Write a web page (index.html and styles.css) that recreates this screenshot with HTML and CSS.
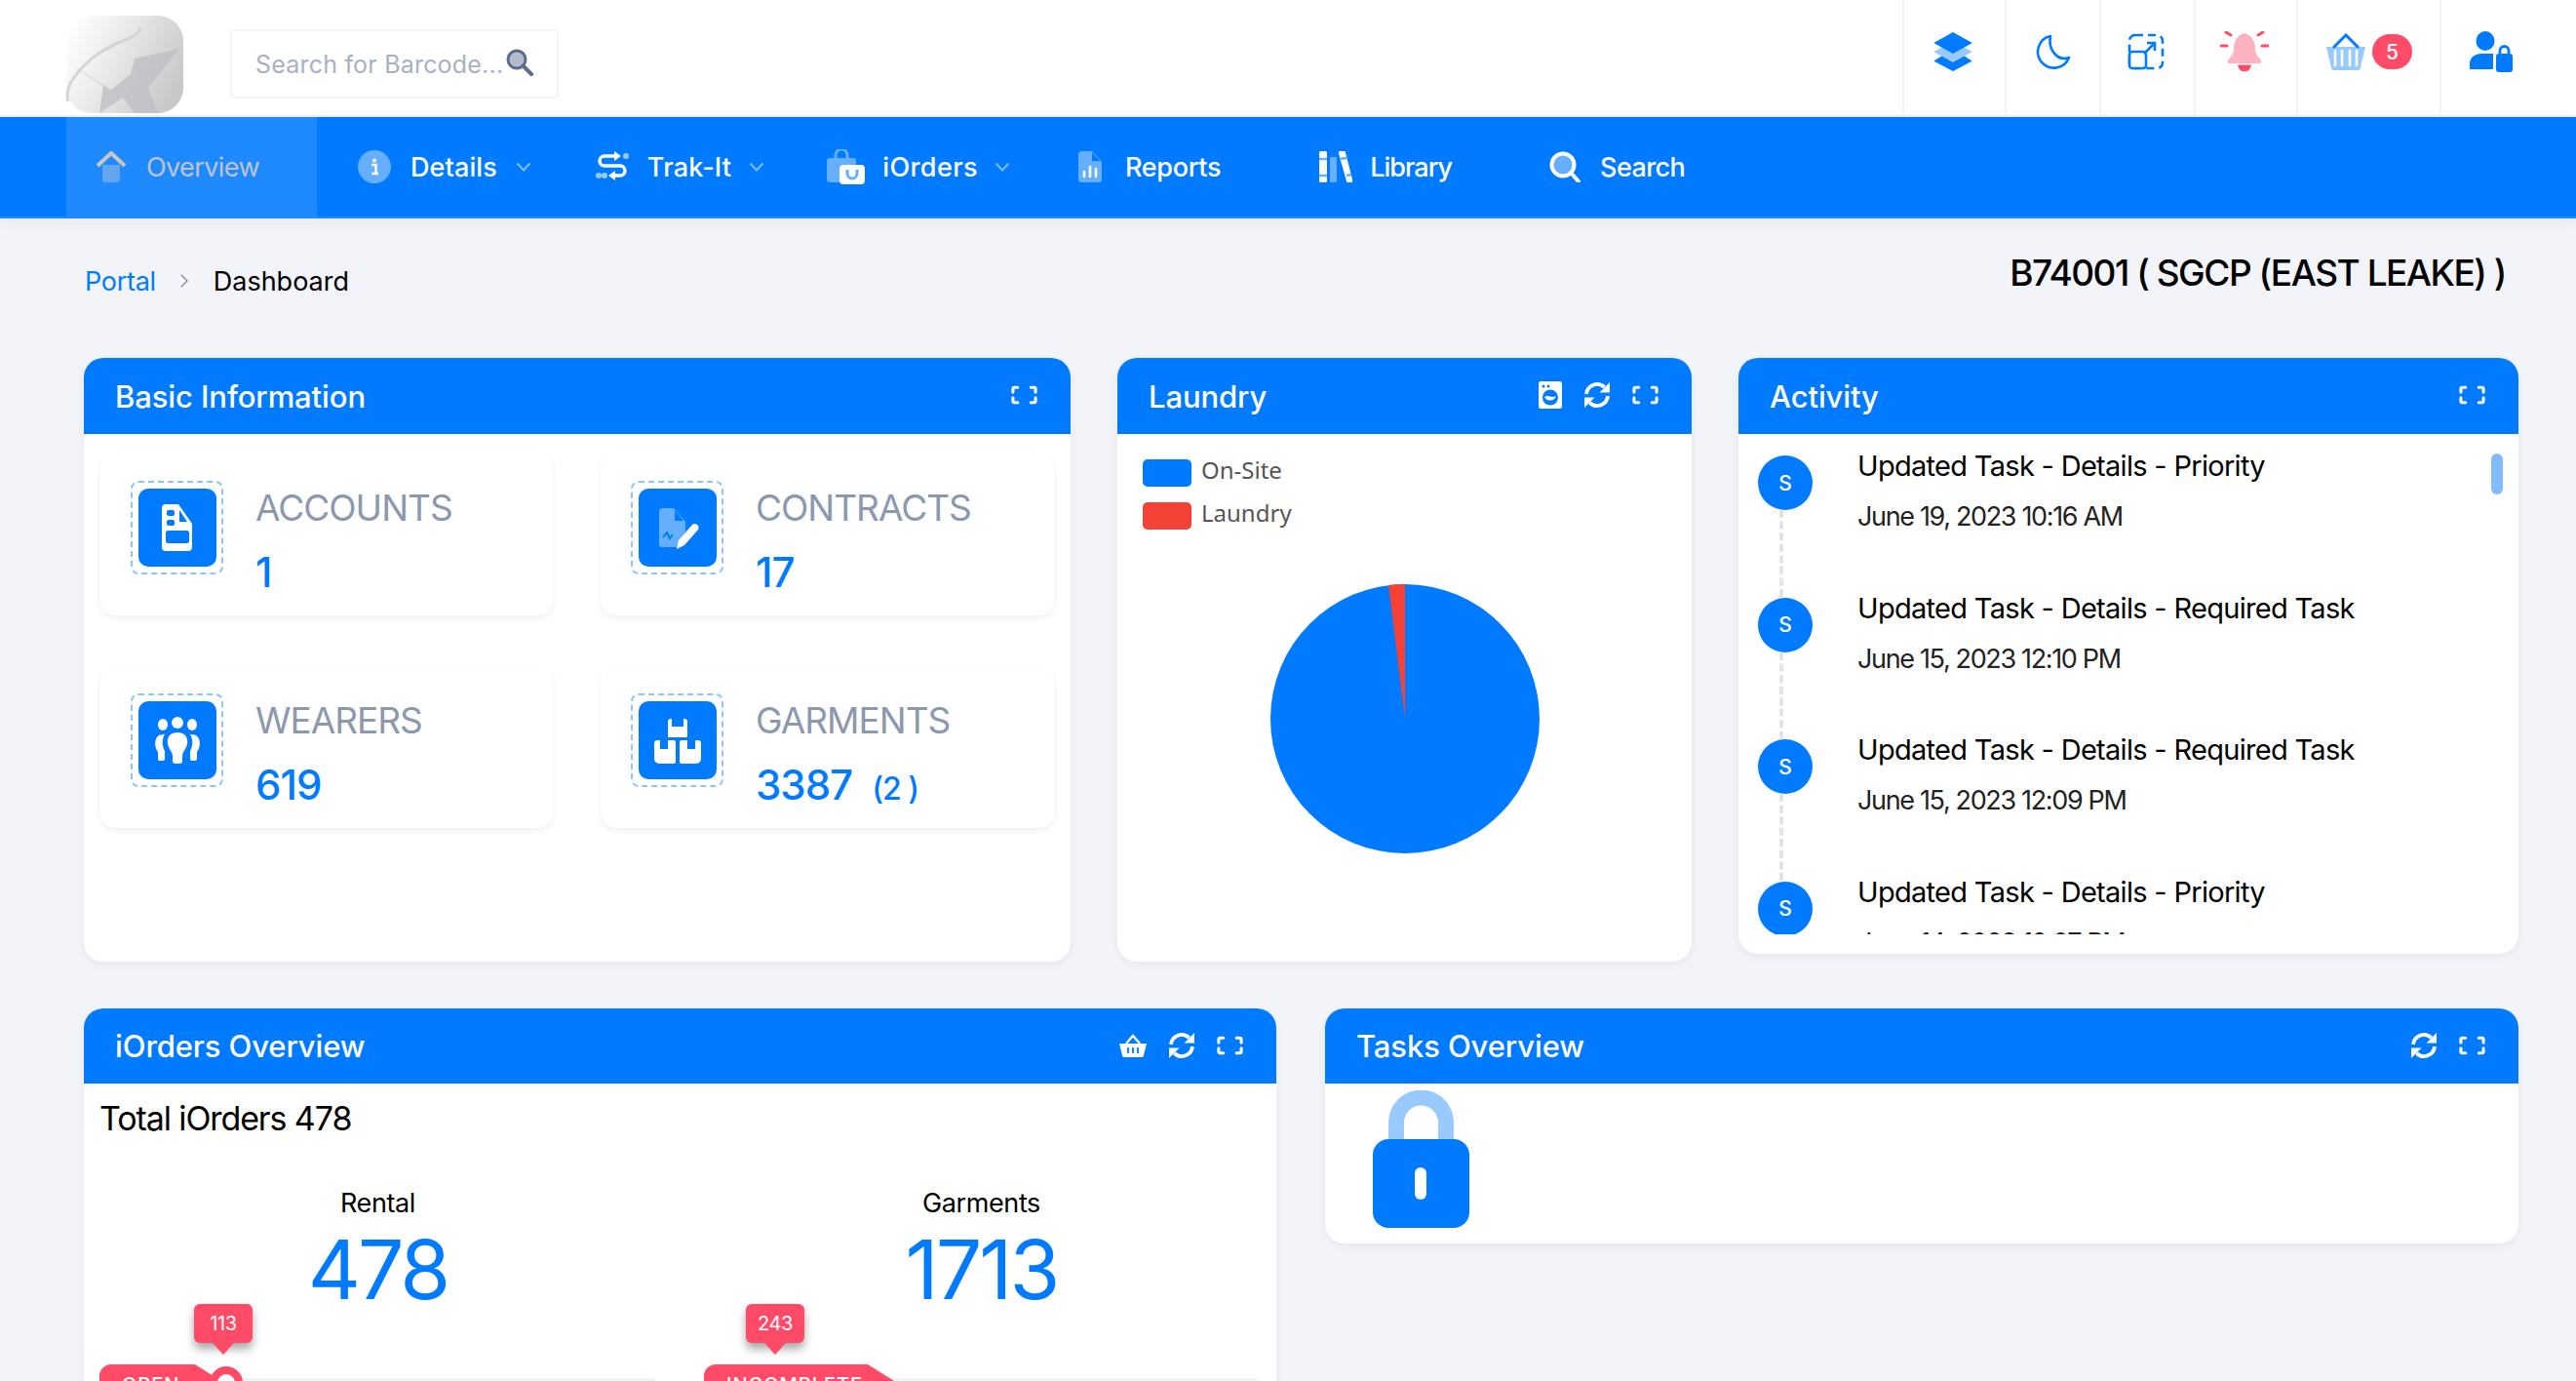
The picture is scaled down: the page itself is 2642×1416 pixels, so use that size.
FILE: index.html
```html
<!DOCTYPE html>
<html lang="en">
<head>
  <meta charset="UTF-8" />
  <title>Dashboard</title>
  <link rel="stylesheet" href="styles.css">
</head>
<body>

  <svg class="defs" width="0" height="0">
    <symbol id="i-expand" viewBox="0 0 28 20">
      <path d="M2 7V3.5A1.5 1.5 0 0 1 3.5 2H7M21 2h3.5A1.5 1.5 0 0 1 26 3.500V7M26 13v3.500a1.500 1.500 0 0 1-1.500 1.500H21M7 18H3.500A1.500 1.500 0 0 1 2 16.500V13" fill="none" stroke="#fff" stroke-width="3.200" stroke-linecap="round"/>
    </symbol>
    <symbol id="i-sync" viewBox="0 0 28 28">
      <path d="M3 13A11 11 0 0 1 21.500 6M25 15A11 11 0 0 1 6.500 22" fill="none" stroke="#fff" stroke-width="3.800"/>
      <path d="M27 1v10.500H16.500zM1 27V16.500h10.500z" fill="#fff"/>
    </symbol>
    <symbol id="i-chev" viewBox="0 0 16 10">
      <path d="M1.500 1.500L8 8.500l6.500-7" fill="none" stroke="#7fb9ff" stroke-width="2"/>
    </symbol>
  </svg>

  <header class="topbar">
    <div class="topbar-left">
      <svg class="logo" viewBox="0 0 122 100">
        <defs>
          <linearGradient id="logoFill" x1="0" y1="0.200" x2="1" y2="0.600">
            <stop offset="0" stop-color="#fff"/>
            <stop offset="0.450" stop-color="#e8e8e8"/>
            <stop offset="1" stop-color="#c8c8c8"/>
          </linearGradient>
        </defs>
        <rect x="2" y="0" width="120" height="100" rx="26" fill="url(#logoFill)"/>
        <path d="M78 12C76 26 50 24 26 46C8 62 0 76 4 88" fill="none" stroke="#d4d4d4" stroke-width="3"/>
        <path d="M0 46L48 76L68 60L72 44L118 34L86 74L96 100H72L60 84L36 100L40 72z" fill="#bcbec2" opacity="0.750"/>
      </svg>
      <div class="barcode-search">
        <span class="barcode-text">Search for Barcode...</span>
        <svg class="barcode-icon" viewBox="0 0 28 28">
          <circle cx="11" cy="11" r="9" fill="#b4bccb" stroke="#5a6d8f" stroke-width="3"/>
          <path d="M17.500 17.500L26 26" stroke="#5a6d8f" stroke-width="4" stroke-linecap="round"/>
        </svg>
      </div>
    </div>
    <div class="topbar-right">
      <div class="tool tool-layers">
        <svg width="40" height="40" viewBox="0 0 40 40">
          <path d="M20 17L38 28.500a1 1 0 0 1 0 2L20 40L2 30.500a1 1 0 0 1 0-2z" fill="#007bff"/>
          <path d="M20 9L38 19a1 1 0 0 1 0 2L20 31L2 21a1 1 0 0 1 0-2z" fill="#99caff"/>
          <path d="M20 0L38 10a1 1 0 0 1 0 2L20 22L2 12a1 1 0 0 1 0-2z" fill="#007bff"/>
        </svg>
      </div>
      <div class="tool tool-moon">
        <svg width="36" height="36" viewBox="0 0 36 36">
          <path d="M15 2A16.500 16.500 0 1 0 34 24C24 28 12 18 15 2z" fill="none" stroke="#007bff" stroke-width="2.600" stroke-linejoin="round"/>
        </svg>
      </div>
      <div class="tool tool-resize">
        <svg width="38" height="38" viewBox="0 0 38 38">
          <rect x="2" y="2" width="34" height="34" rx="6" fill="none" stroke="#007bff" stroke-width="2.600" stroke-dasharray="8 5"/>
          <rect x="2" y="19" width="17" height="17" rx="3" fill="#fff" stroke="#007bff" stroke-width="2.600"/>
          <path d="M17 21L27 11M20 10h8v8" fill="none" stroke="#007bff" stroke-width="2.600"/>
        </svg>
      </div>
      <div class="tool tool-bell">
        <svg width="50" height="42" viewBox="0 0 50 42">
          <path d="M25 2c8 2 11 9 11 16 0 5 3 8 6 12 1 2 0 3-2 3H10c-2 0-3-1-2-3 3-4 6-7 6-12 0-7 3-14 11-16z" fill="#ffb3c0"/>
          <path d="M20 36h10c-1 5-9 5-10 0zM6 1l5 3M44 1l-5 3M1 15h6M43 15h6" stroke="#ff4a68" stroke-width="3" stroke-linecap="round" fill="#ff4a68"/>
        </svg>
      </div>
      <div class="tool tool-basket">
        <svg width="42" height="38" viewBox="0 0 42 38">
          <path d="M1 14h40l-5 21a3 3 0 0 1-3 3H9a3 3 0 0 1-3-3z" fill="#99caff"/>
          <path d="M10 18v15M17 18v15M25 18v15M32 18v15" stroke="#fff" stroke-width="2.600" stroke-linecap="round"/>
          <path d="M9 14L21 2L33 14" fill="none" stroke="#007bff" stroke-width="3" stroke-linecap="round"/>
        </svg>
        <span class="count-badge">5</span>
      </div>
      <div class="tool tool-user">
        <svg width="44" height="42" viewBox="0 0 44 42">
          <ellipse cx="16" cy="10" rx="9.500" ry="10" fill="#007bff"/>
          <path d="M0 39V33C0 27 6 23 12 23H24V39z" fill="#007bff"/>
          <rect x="27" y="23" width="17" height="19" rx="3" fill="#007bff"/>
          <path d="M31 24v-4a4.500 4.500 0 0 1 9 0v4" fill="none" stroke="#007bff" stroke-width="2.800"/>
        </svg>
      </div>
    </div>
  </header>

  <nav class="mainnav">
    <a class="nav-item active">
      <svg width="32" height="32" viewBox="0 0 32 32">
        <path d="M7 14h18v15a3 3 0 0 1-3 3H10a3 3 0 0 1-3-3z" fill="#62a6ef"/>
        <path d="M2 15L16 2L30 15" fill="none" stroke="#c9c5bf" stroke-width="4"/>
      </svg>
      <span>Overview</span>
    </a>
    <a class="nav-item item-details">
      <svg width="34" height="34" viewBox="0 0 34 34">
        <circle cx="17" cy="17" r="17" fill="#66afff"/>
        <path d="M14 15h4.500v9H21M14.500 24h6.500" fill="none" stroke="#fff" stroke-width="2.400"/>
        <circle cx="17" cy="10.500" r="2" fill="#fff"/>
      </svg>
      <span>Details</span>
      <svg class="chev"><use href="#i-chev"/></svg>
    </a>
    <a class="nav-item item-trak">
      <svg width="34" height="32" viewBox="0 0 34 32">
        <path d="M20 5H9a4.500 4.500 0 0 0 0 10h16a4.500 4.500 0 0 1 0 10h-6" fill="none" stroke="#fff" stroke-width="3.400"/>
        <path d="M19 0l7 5-7 5zM20 20l-7 5 7 5z" fill="#fff"/>
        <circle cx="31" cy="5" r="3" fill="#99caff"/>
        <circle cx="3" cy="25" r="3" fill="#99caff"/>
        <circle cx="9" cy="25" r="3" fill="#99caff"/>
      </svg>
      <span>Trak-It</span>
      <svg class="chev"><use href="#i-chev"/></svg>
    </a>
    <a class="nav-item item-iorders">
      <svg width="39" height="36" viewBox="0 0 39 36">
        <rect x="0" y="9" width="30" height="25" rx="3" fill="#66afff"/>
        <path d="M9 10V6a6 6 0 0 1 12 0v4" fill="none" stroke="#66afff" stroke-width="3"/>
        <rect x="13" y="16" width="26" height="20" rx="4" fill="#fff"/>
        <path d="M21 21v4a5 5 0 0 0 10 0v-4" fill="none" stroke="#66afff" stroke-width="3"/>
      </svg>
      <span>iOrders</span>
      <svg class="chev"><use href="#i-chev"/></svg>
    </a>
    <a class="nav-item item-reports">
      <svg width="24" height="32" viewBox="0 0 24 32">
        <path d="M4 0h10l10 11v18a3 3 0 0 1-3 3H3a3 3 0 0 1-3-3V4a4 4 0 0 1 4-4z" fill="#66afff"/>
        <path d="M14 1v9h8z" fill="#007bff"/>
        <path d="M6 26v-5M12 26v-10M18 26v-8" stroke="#fff" stroke-width="2.600" stroke-linecap="round"/>
      </svg>
      <span>Reports</span>
    </a>
    <a class="nav-item item-library">
      <svg width="34" height="32" viewBox="0 0 34 32">
        <rect x="0" y="0" width="8" height="32" rx="1.500" fill="#fff"/>
        <path d="M0 8h8M0 25h8" stroke="#66afff" stroke-width="2.500"/>
        <rect x="11" y="6" width="7" height="26" rx="1.500" fill="#66afff"/>
        <path d="M20 2.500a3.500 3.500 0 0 1 7-1L34 29a3 3 0 0 1-6 2z" fill="#fff"/>
        <path d="M21 8l7-1M28 25l5-1" stroke="#66afff" stroke-width="2.500"/>
      </svg>
      <span>Library</span>
    </a>
    <a class="nav-item item-search">
      <svg width="32" height="32" viewBox="0 0 32 32">
        <circle cx="14" cy="14" r="11.500" fill="#66afff" stroke="#fff" stroke-width="4"/>
        <path d="M22 22L30 31" stroke="#fff" stroke-width="4" stroke-linecap="round"/>
      </svg>
      <span>Search</span>
    </a>
  </nav>

  <main class="content">
    <div class="page-head">
      <div class="crumbs">
        <a class="crumb-link">Portal</a>
        <svg class="crumb-sep" viewBox="0 0 10 16"><path d="M2 2l6 6-6 6" fill="none" stroke="#8d99ae" stroke-width="1.600"/></svg>
        <span class="crumb-now">Dashboard</span>
      </div>
      <h1 class="site-title">B74001 ( SGCP (EAST LEAKE) )</h1>
    </div>

    <section class="row row-top">
      <div class="card card-info">
        <div class="card-head">
          <h2>Basic Information</h2>
          <div class="head-icons"><svg class="ic-expand"><use href="#i-expand"/></svg></div>
        </div>
        <div class="tiles">
          <div class="tile">
            <div class="tile-icon">
              <svg width="80" height="80" viewBox="0 0 80 80">
                <path d="M28 16h13l14 20v24a4 4 0 0 1-4 4H28a4 4 0 0 1-4-4V20a4 4 0 0 1 4-4z" fill="#fff"/>
                <path d="M42 22v12h8z" fill="#007bff"/>
                <rect x="29" y="22" width="8" height="6" rx="2" fill="#007bff"/>
                <rect x="29" y="32" width="8" height="6" rx="2" fill="#007bff"/>
                <rect x="28" y="43" width="24" height="13" rx="2.500" fill="#007bff"/>
              </svg>
            </div>
            <div class="tile-text">
              <div class="tile-label">ACCOUNTS</div>
              <div class="tile-value">1</div>
            </div>
          </div>
          <div class="tile">
            <div class="tile-icon">
              <svg width="80" height="80" viewBox="0 0 80 80">
                <path d="M25 20h11l12 14v10L40 60H24a3 3 0 0 1-3-3V24a4 4 0 0 1 4-4z" fill="#66afff"/>
                <path d="M37 22v11h9z" fill="#007bff"/>
                <path d="M25 50l4-5 3 6 3-4" fill="none" stroke="#007bff" stroke-width="2"/>
                <path d="M39 62l2-9 14-16a4 4 0 0 1 6 5L47 58z" fill="#fff"/>
              </svg>
            </div>
            <div class="tile-text">
              <div class="tile-label">CONTRACTS</div>
              <div class="tile-value">17</div>
            </div>
          </div>
          <div class="tile">
            <div class="tile-icon">
              <svg width="80" height="80" viewBox="0 0 80 80">
                <circle cx="40" cy="22" r="6" fill="#fff"/>
                <ellipse cx="25" cy="24" rx="5" ry="6" fill="#fff"/>
                <ellipse cx="55" cy="24" rx="5" ry="6" fill="#fff"/>
                <path d="M40 32c8 0 11 5 10 12-1 5-5 8-5 12v5a3 3 0 0 1-3 3h-4a3 3 0 0 1-3-3v-5c0-4-4-7-5-12-1-7 2-12 10-12z" fill="#fff"/>
                <path d="M27 34c-3 4-3 12 0 17v8a2 2 0 0 1-2 2h-3a2 2 0 0 1-2-2v-7c-4-5-4-14 1-17 2-1 4-1 6-1zM53 34c3 4 3 12 0 17v8a2 2 0 0 0 2 2h3a2 2 0 0 0 2-2v-7c4-5 4-14-1-17-2-1-4-1-6-1z" fill="#fff"/>
              </svg>
            </div>
            <div class="tile-text">
              <div class="tile-label">WEARERS</div>
              <div class="tile-value">619</div>
            </div>
          </div>
          <div class="tile">
            <div class="tile-icon">
              <svg width="80" height="80" viewBox="0 0 80 80">
                <path d="M30 21a3 3 0 0 1 3-3h1v8h12v-8h1a3 3 0 0 1 3 3v16H30z" fill="#fff"/>
                <path d="M16 43a3 3 0 0 1 3-3h3v9h8v-9h6a2 2 0 0 1 2 2v20a2 2 0 0 1-2 2H21a5 5 0 0 1-5-5z" fill="#fff"/>
                <path d="M42 42a2 2 0 0 1 2-2h6v9h8v-9h3a3 3 0 0 1 3 3v16a5 5 0 0 1-5 5H44a2 2 0 0 1-2-2z" fill="#fff"/>
              </svg>
            </div>
            <div class="tile-text">
              <div class="tile-label">GARMENTS</div>
              <div class="tile-value">3387 <small>(2 )</small></div>
            </div>
          </div>
        </div>
      </div>

      <div class="card card-laundry">
        <div class="card-head">
          <h2>Laundry</h2>
          <div class="head-icons">
            <svg class="ic-washer" viewBox="0 0 24 28">
              <rect width="24" height="28" rx="2.500" fill="#fff"/>
              <circle cx="12" cy="16.500" r="8" fill="#007bff"/>
              <path d="M6 16c4-3 7 2 12-1a6.500 6.500 0 0 1-12 1z" fill="#fff"/>
              <circle cx="5" cy="5" r="1.500" fill="#007bff"/>
              <circle cx="10" cy="5" r="1.500" fill="#007bff"/>
            </svg>
            <svg class="ic-sync"><use href="#i-sync"/></svg>
            <svg class="ic-expand"><use href="#i-expand"/></svg>
          </div>
        </div>
        <div class="legend">
          <div class="legend-row"><i class="swatch swatch-blue"></i><span>On-Site</span></div>
          <div class="legend-row"><i class="swatch swatch-red"></i><span>Laundry</span></div>
        </div>
        <div class="pie-wrap">
          <svg class="pie" width="276" height="276" viewBox="0 0 276 276">
            <circle cx="138" cy="138" r="138" fill="#007bff"/>
            <path d="M138 138V0A138 138 0 0 0 121 1z" fill="#f44336"/>
          </svg>
        </div>
      </div>

      <div class="card card-activity">
        <div class="card-head">
          <h2>Activity</h2>
          <div class="head-icons"><svg class="ic-expand"><use href="#i-expand"/></svg></div>
        </div>
        <div class="feed-box">
          <div class="feed">
            <div class="feed-row">
              <div class="feed-rail"><span class="avatar">S</span></div>
              <div>
                <div class="feed-title">Updated Task - Details - Priority</div>
                <div class="feed-date">June 19, 2023 10:16 AM</div>
              </div>
            </div>
            <div class="feed-row">
              <div class="feed-rail"><span class="avatar">S</span></div>
              <div>
                <div class="feed-title">Updated Task - Details - Required Task</div>
                <div class="feed-date">June 15, 2023 12:10 PM</div>
              </div>
            </div>
            <div class="feed-row">
              <div class="feed-rail"><span class="avatar">S</span></div>
              <div>
                <div class="feed-title">Updated Task - Details - Required Task</div>
                <div class="feed-date">June 15, 2023 12:09 PM</div>
              </div>
            </div>
            <div class="feed-row">
              <div class="feed-rail"><span class="avatar">S</span></div>
              <div>
                <div class="feed-title">Updated Task - Details - Priority</div>
                <div class="feed-date">June 14, 2023 12:07 PM</div>
              </div>
            </div>
          </div>
          <div class="scroll-thumb"></div>
        </div>
      </div>
    </section>

    <section class="row row-bottom">
      <div class="card card-orders">
        <div class="card-head">
          <h2>iOrders Overview</h2>
          <div class="head-icons">
            <svg class="ic-basket" viewBox="0 0 28 24">
              <path d="M0 10h28l-3 12a2 2 0 0 1-2 2H5a2 2 0 0 1-2-2z" fill="#fff"/>
              <path d="M7 10L14 2l7 8" fill="none" stroke="#fff" stroke-width="2.400"/>
              <path d="M9 14v6M14 14v6M19 14v6" stroke="#007bff" stroke-width="1.800"/>
            </svg>
            <svg class="ic-sync"><use href="#i-sync"/></svg>
            <svg class="ic-expand"><use href="#i-expand"/></svg>
          </div>
        </div>
        <div class="orders-body">
          <div class="orders-total">Total iOrders 478</div>
          <div class="orders-cols">
            <div class="orders-col">
              <div class="col-label">Rental</div>
              <div class="col-value">478</div>
              <div class="progress">
                <div class="track"></div>
                <div class="ribbon ribbon-open">OPEN</div>
                <span class="knob"></span>
                <div class="bubble bubble-open">113</div>
              </div>
            </div>
            <div class="orders-col">
              <div class="col-label">Garments</div>
              <div class="col-value">1713</div>
              <div class="progress">
                <div class="track"></div>
                <div class="ribbon ribbon-incomplete">INCOMPLETE</div>
                <div class="bubble bubble-incomplete">243</div>
              </div>
            </div>
          </div>
        </div>
      </div>

      <div class="card card-tasks">
        <div class="card-head">
          <h2>Tasks Overview</h2>
          <div class="head-icons">
            <svg class="ic-sync"><use href="#i-sync"/></svg>
            <svg class="ic-expand"><use href="#i-expand"/></svg>
          </div>
        </div>
        <div class="tasks-body">
          <svg width="99" height="141" viewBox="0 0 99 141">
            <path d="M24 52V33a25.500 25.500 0 0 1 51 0v19" fill="none" stroke="#99caff" stroke-width="16"/>
            <rect x="0" y="50" width="99" height="91" rx="16" fill="#007bff"/>
            <rect x="43" y="79" width="12" height="33" rx="6" fill="#fff"/>
          </svg>
        </div>
      </div>
    </section>
  </main>

</body>
</html>
```

FILE: styles.css
```css
* {
  box-sizing: border-box;
}

html {
  height: 100%;
  overflow: hidden;
}

body {
  margin: 0;
  height: 100vh;
  overflow: hidden;
  background: #f2f4f9;
  font-family: Inter, "Liberation Sans", sans-serif;
  color: #000;
}

h1, h2 {
  margin: 0;
  font-weight: 500;
}

.defs {
  position: absolute;
}

/* top bar */
.topbar {
  height: 120px;
  background: #fff;
  border-bottom: 2px solid #f0f0f0;
  display: flex;
  justify-content: space-between;
}

.topbar-left {
  display: flex;
  align-items: flex-start;
  padding-left: 66px;
}

.logo {
  width: 122px;
  height: 100px;
  margin-top: 16px;
}

.barcode-search {
  width: 337px;
  height: 71px;
  margin: 30px 0 0 48px;
  padding: 0 24px;
  border: 2px solid #f1f3fb;
  border-radius: 6px;
  display: flex;
  align-items: center;
  gap: 3px;
}

.barcode-text {
  font-size: 25px;
  letter-spacing: 0.2px;
  color: #a9b1c1;
  white-space: nowrap;
}

.barcode-icon {
  width: 28px;
  height: 28px;
  margin-top: -3px;
  flex: none;
}

.topbar-right {
  display: flex;
}

.tool {
  display: flex;
  align-items: center;
  justify-content: center;
  border-left: 2px solid #f3f3f3;
  height: 118px;
  padding-bottom: 12px;
}

.tool-layers { width: 105px; padding-right: 3px; }
.tool-moon { width: 97px; }
.tool-resize { width: 97px; padding-right: 3px; }
.tool-bell { width: 105px; padding-right: 3px; }
.tool-basket { width: 147px; gap: 6px; }
.tool-user { width: 140px; padding-right: 36px; }

.count-badge {
  width: 41px;
  height: 36px;
  border-radius: 18px;
  background: #ff4a68;
  color: #fff;
  font-size: 21px;
  font-weight: 500;
  display: flex;
  align-items: center;
  justify-content: center;
}

/* nav */
.mainnav {
  height: 104px;
  background: #007bff;
  border-bottom: 2px solid #1a8cff;
  box-shadow: 0 4px 12px rgba(0, 0, 0, 0.05);
  display: flex;
  padding-left: 68px;
  color: #fff;
  font-size: 27px;
  font-weight: 500;
  letter-spacing: -0.3px;
}

.nav-item {
  display: flex;
  align-items: center;
  gap: 20px;
  margin-left: 66px;
}

.nav-item svg {
  flex: none;
}

.nav-item.active {
  width: 257px;
  margin-left: 0;
  padding-left: 30px;
  background: #1f8aff;
  color: #bfc3c9;
  font-weight: 400;
  letter-spacing: -0.6px;
}

.item-details { margin-left: 42px; letter-spacing: 0.1px; }
.item-trak { gap: 19px; letter-spacing: 0.2px; }
.item-iorders { margin-left: 64px; gap: 18px; letter-spacing: 0.4px; }
.item-reports { margin-left: 70px; gap: 24px; }
.item-library { margin-left: 101px; gap: 18px; letter-spacing: -1px; }
.item-search { margin-left: 100px; gap: 20px; letter-spacing: -0.6px; }

.chev {
  width: 16px;
  height: 10px;
  margin-left: -1px;
}

/* page */
.content {
  padding: 0 59px 0 86px;
}

.page-head {
  height: 143px;
  display: flex;
  justify-content: space-between;
  margin-right: 13px;
}

.crumbs {
  display: flex;
  align-items: center;
  height: 34px;
  margin-top: 47px;
  padding-left: 1px;
  font-size: 27px;
}

.crumb-link {
  color: #007bff;
  letter-spacing: -0.3px;
}

.crumb-sep {
  width: 10px;
  height: 16px;
  margin: 0 25px 0 24px;
}

.site-title {
  margin-top: 33px;
  font-size: 37px;
  line-height: 46px;
  font-weight: 500;
  letter-spacing: -1.5px;
}

.row {
  display: grid;
  align-items: start;
}

.row-top {
  grid-template-columns: 1012px 589px 800px;
  column-gap: 48px;
}

.row-bottom {
  grid-template-columns: 1223px 1224px;
  column-gap: 50px;
  margin-top: 48px;
}

.card {
  background: #fff;
  border-radius: 20px;
  box-shadow: 0 3px 8px rgba(30, 40, 70, 0.06);
  overflow: hidden;
}

.card-info, .card-laundry { height: 619px; }
.card-activity { height: 611px; }
.card-orders { height: 700px; }
.card-tasks { height: 241px; }

.card-head {
  height: 78px;
  padding: 0 34px 0 32px;
  background: #007bff;
  color: #fff;
  display: flex;
  align-items: center;
  justify-content: space-between;
}

.row-bottom .card-head {
  height: 77px;
}

.card-head h2 {
  font-size: 31px;
  font-weight: 500;
  letter-spacing: -0.1px;
}

.head-icons {
  display: flex;
  align-items: center;
  gap: 22px;
  margin-top: -2px;
}

.ic-expand { width: 27px; height: 20px; }
.ic-sync { width: 28px; height: 28px; }
.ic-washer { width: 24px; height: 28px; }
.ic-basket { width: 28px; height: 24px; }

/* basic info tiles */
.tiles {
  display: grid;
  grid-template-columns: 464px 465px;
  column-gap: 49px;
  row-gap: 51px;
  padding: 19px 0 0 17px;
}

.tile {
  height: 167px;
  border-radius: 16px;
  box-shadow: 0 3px 6px rgba(30, 40, 70, 0.07);
  padding: 29px 0 0 31px;
  display: flex;
  gap: 33px;
}

.tile-icon {
  width: 95px;
  height: 96px;
  padding: 6px;
  border: 2px dashed #8cc4ff;
  border-radius: 8px;
}

.tile-icon svg {
  display: block;
  background: #007bff;
  border-radius: 10px;
}

.tile-label {
  margin-top: 5px;
  font-size: 37px;
  line-height: 46px;
  font-weight: 400;
  letter-spacing: -1px;
  color: #8c98ad;
}

.tile-value {
  margin-top: 19px;
  font-size: 42px;
  line-height: 48px;
  font-weight: 500;
  letter-spacing: -1px;
  color: #007bff;
}

.tile-value small {
  margin-left: 10px;
  font-size: 32px;
  letter-spacing: -1px;
}

/* laundry */
.legend {
  padding: 26px 0 0 26px;
  font-family: "Noto Sans", sans-serif;
  font-size: 24px;
  color: #555;
}

.legend-row {
  display: flex;
  align-items: center;
  gap: 10px;
  height: 28px;
  margin-bottom: 16px;
}

.legend-row span {
  margin-top: -7px;
}

.swatch {
  width: 50px;
  height: 28px;
  border-radius: 5px;
}

.swatch-blue { background: #007bff; }
.swatch-red { background: #f44336; }

.pie-wrap {
  display: flex;
  justify-content: center;
  padding-top: 40px;
}

/* activity */
.feed-box {
  position: relative;
  height: 513px;
  overflow: hidden;
  padding: 16px 0 0 20px;
}

.feed-row {
  display: flex;
  gap: 46px;
  height: 145.5px;
}

.feed-rail {
  width: 56px;
  padding-top: 6px;
  position: relative;
  flex: none;
}

.feed-rail::after {
  content: "";
  position: absolute;
  left: 22px;
  top: 62px;
  height: 89px;
  border-left: 4px dashed #e4e4e4;
}

.feed-row:last-child .feed-rail::after {
  display: none;
}

.avatar {
  width: 56px;
  height: 56px;
  border-radius: 50%;
  background: #007bff;
  color: #fff;
  font-size: 21px;
  font-weight: 500;
  display: flex;
  align-items: center;
  justify-content: center;
}

.feed-title,
.feed-date {
  font-size: 29px;
  line-height: 36px;
  letter-spacing: -0.7px;
  white-space: nowrap;
}

.feed-title {
  margin-top: -1px;
}

.feed-date {
  margin-top: 16px;
  font-size: 27px;
  letter-spacing: -1.35px;
  color: #222;
}

.scroll-thumb {
  position: absolute;
  top: 20px;
  right: 16px;
  width: 12px;
  height: 42px;
  border-radius: 6px;
  background: #80bcff;
}

/* iorders */
.orders-body {
  padding: 16px 18px 0 16px;
}

.orders-total {
  font-size: 34px;
  line-height: 40px;
  letter-spacing: -1.1px;
}

.orders-cols {
  display: grid;
  grid-template-columns: 571px 569px;
  column-gap: 49px;
  margin-top: 50px;
}

.orders-col {
  text-align: center;
}

.col-label {
  font-size: 27px;
  line-height: 34px;
  letter-spacing: -0.4px;
}

.col-value {
  margin-top: 6px;
  font-size: 84px;
  line-height: 90px;
  font-weight: 400;
  letter-spacing: -3px;
  color: #007bff;
}

.progress {
  position: relative;
  margin-top: 52px;
  padding-top: 14px;
  height: 50px;
}

.ribbon {
  position: absolute;
  left: 0;
  top: 0;
  height: 44px;
  padding: 9px 0 0 23px;
  background: #ff4a68;
  border-radius: 12px 0 0 0;
  color: #fff;
  font-size: 20px;
  line-height: 24px;
  font-weight: 500;
  letter-spacing: 1px;
  text-align: left;
  clip-path: polygon(0 0, calc(100% - 70px) 0, 100% 100%, 0 100%);
}

.ribbon-open { width: 168px; }
.ribbon-incomplete { width: 238px; }

.knob {
  position: absolute;
  left: 113px;
  top: 2px;
  width: 34px;
  height: 34px;
  border: 8px solid #ff4a68;
  border-radius: 50%;
  background: #fff;
}

.track {
  height: 30px;
  background: #f3f3f3;
  border-radius: 4px;
}

.bubble {
  position: absolute;
  top: -62px;
  width: 60px;
  height: 40px;
  border-radius: 6px;
  background: #ff4a68;
  color: #fff;
  font-size: 20px;
  line-height: 40px;
  letter-spacing: -0.4px;
  box-shadow: 0 6px 10px rgba(0, 0, 0, 0.35);
}

.bubble::after {
  content: "";
  position: absolute;
  left: 50%;
  top: 100%;
  margin-left: -11px;
  border-style: solid;
  border-width: 12px 11px 0;
  border-color: #ff4a68 transparent transparent;
}

.bubble-open { left: 97px; }
.bubble-incomplete { left: 43px; }

/* tasks */
.tasks-body {
  padding: 7px 0 0 49px;
}

.tasks-body svg {
  display: block;
}
```
